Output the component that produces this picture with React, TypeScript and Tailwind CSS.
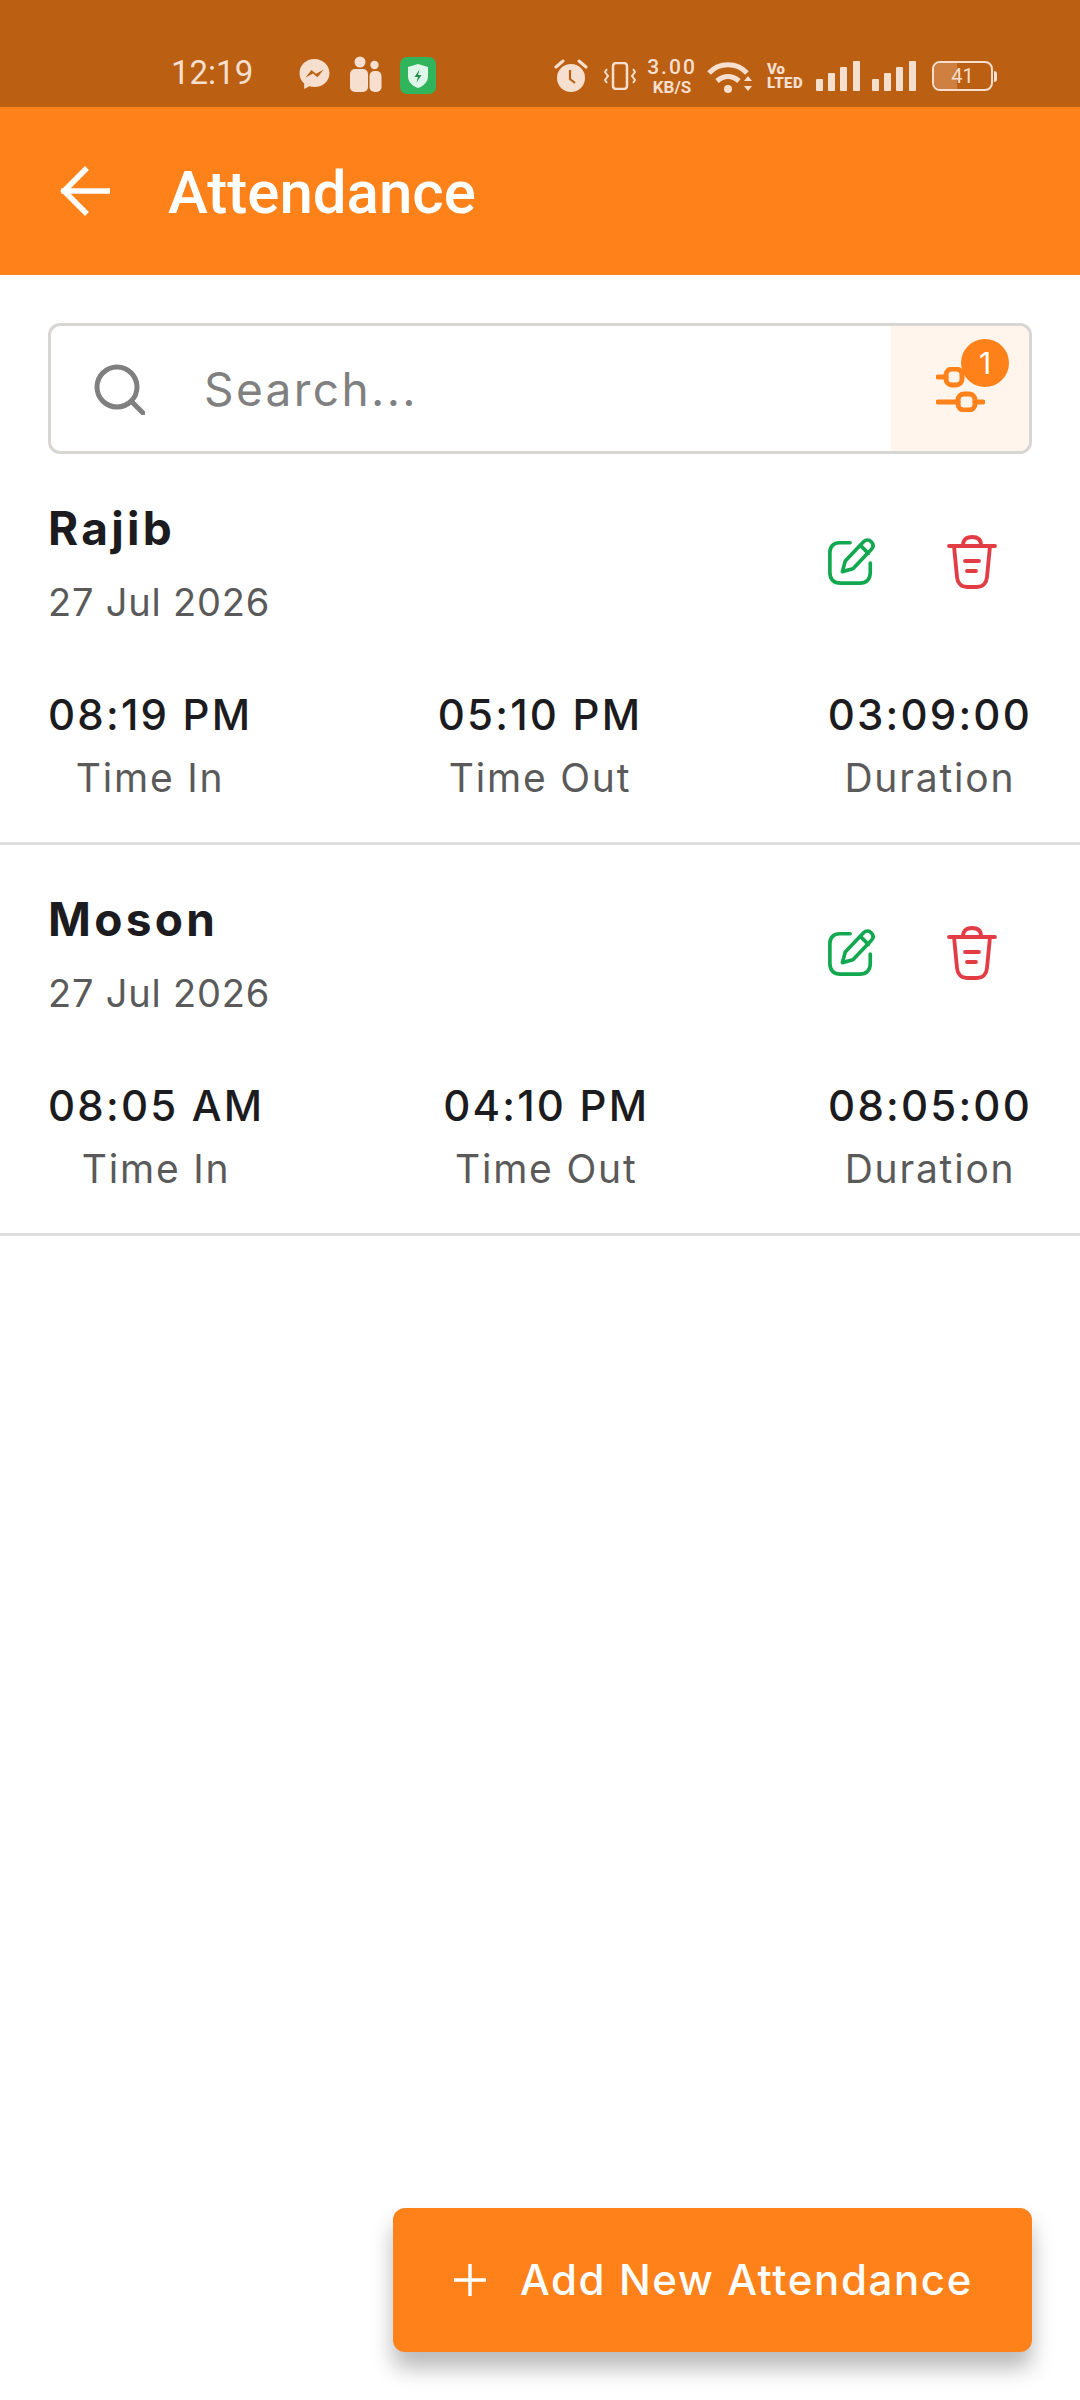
import React from "react";

const font = "font-['Inter','Liberation_Sans',sans-serif]";

const records = [
  { name: "Rajib", date: "27 Jul 2026", timeIn: "08:19 PM", timeOut: "05:10 PM", duration: "03:09:00" },
  { name: "Moson", date: "27 Jul 2026", timeIn: "08:05 AM", timeOut: "04:10 PM", duration: "08:05:00" },
];

const SignalBars = () => (
  <svg width="44" height="30" viewBox="0 0 44 30" fill="#f6dfce">
    <rect x="0" y="18" width="7" height="12" rx="1" />
    <rect x="12" y="12" width="7" height="18" rx="1" />
    <rect x="24" y="6" width="7" height="24" rx="1" />
    <rect x="37" y="0" width="7" height="30" rx="1" />
  </svg>
);

const StatusBar = () => (
  <div className="flex h-[107px] items-end bg-[#bb6012] pb-[12px] pl-[171px] text-[#f6dfce]">
    <span className="mb-[2px] w-[128px] font-['Roboto',sans-serif] text-[33px] leading-[40px] font-normal">12:19</span>
    <svg width="31" height="32" viewBox="0 0 31 32" className="mb-[5px]">
      <path d="M15.5 1C7 1 .5 7.2.5 15.2c0 4.200 1.800 7.900 4.700 10.400V31l5-2.700c1.700.5 3.400.7 5.300.7 8.500 0 15-6.200 15-13.800S24 1 15.500 1z" fill="#f6dfce" />
      <path d="M6.500 19.500l6-7.500 4.500 3.800 7.500-4-6 7.500-4.500-3.800z" fill="#bb6012" />
    </svg>
    <svg width="32" height="36" viewBox="0 0 32 36" fill="#f6dfce" className="mb-[3px] ml-[20px]">
      <circle cx="10" cy="6" r="5.500" />
      <circle cx="24.500" cy="9" r="4.200" />
      <rect x="0" y="13" width="18" height="23" rx="5" />
      <rect x="19.500" y="15" width="12" height="21" rx="5" />
    </svg>
    <div className="mb-[1px] ml-[18px] flex h-[37px] w-[36px] items-center justify-center rounded-[7px] bg-[#30b45c]">
      <svg width="22" height="26" viewBox="0 0 22 26">
        <path d="M11 1l10 3v9c0 6-4.500 10-10 12C5.500 23 1 19 1 13V4z" fill="#dff7ea" />
        <path d="M12.500 6.500L7.500 14H11l-1.500 5.500 5-7.500h-3.500z" fill="#1f8f4a" />
      </svg>
    </div>
    <svg width="34" height="34" viewBox="0 0 34 34" className="mb-[2px] ml-[118px]">
      <circle cx="17" cy="19" r="14" fill="#f6dfce" />
      <path d="M2 8l7-6M32 8l-7-6" stroke="#f6dfce" strokeWidth="3" strokeLinecap="round" />
      <path d="M16 11v9l5 4" stroke="#bb6012" strokeWidth="2.200" fill="none" />
    </svg>
    <svg width="32" height="28" viewBox="0 0 32 28" fill="none" stroke="#f6dfce" className="mb-[5px] ml-[16px]">
      <rect x="9" y="1" width="14" height="26" rx="3" strokeWidth="2.500" />
      <path d="M3 7l-2 3 3 4-3 4 2 3M29 7l2 3-3 4 3 4-2 3" strokeWidth="2" />
    </svg>
    <div className="ml-[9px] flex w-[54px] flex-col items-center gap-[2px] font-['Roboto',sans-serif] font-medium">
      <span className="text-[21px] leading-[21px] tracking-[2px]">3.00</span>
      <span className="text-[17px] leading-[15px] font-bold">KB/S</span>
    </div>
    <svg width="45" height="33" viewBox="0 0 45 33" className="mb-[1px] ml-[8px]" fill="none" stroke="#f6dfce" strokeWidth="5">
      <path d="M2 12C12 1 30 1 40 12" />
      <path d="M10 20c7-6 15-6 22 0" />
      <circle cx="21" cy="28" r="4" fill="#f6dfce" stroke="none" />
      <path d="M37 20l4-5 4 5zM37 25l4 5 4-5z" fill="#f6dfce" stroke="none" />
    </svg>
    <div className="mb-[5px] ml-[15px] flex w-[36px] flex-col font-['Roboto',sans-serif] text-[15px] leading-[14px] font-black">
      <span>Vo</span>
      <span className="tracking-[0.5px]">LTED</span>
    </div>
    <div className="mb-[4px] ml-[13px]"><SignalBars /></div>
    <div className="mb-[4px] ml-[12px]"><SignalBars /></div>
    <div className="mb-[4px] ml-[16px] flex items-center">
      <div className="flex h-[30px] w-[61px] items-center overflow-hidden rounded-[8px] border-2 border-[#f6dfce]">
        <div className="flex h-full w-full items-center justify-center bg-[linear-gradient(90deg,#cf7f3f_0%,#cf7f3f_41%,transparent_41%)] font-['Roboto',sans-serif] text-[20px] leading-[20px]">41</div>
      </div>
      <div className="ml-[1px] h-[11px] w-[3px] rounded-r bg-[#f6dfce]" />
    </div>
  </div>
);

const Header = () => (
  <div className="flex h-[168px] items-center bg-[#ff811a] pl-[60px] text-white">
    <svg width="50" height="50" viewBox="0 0 50 50" fill="none" stroke="white" strokeWidth="5.500" strokeLinecap="square">
      <path d="M4 25h44M25 4L4 25l21 21" />
    </svg>
    <span className="mt-[3px] ml-[58px] font-['Roboto',sans-serif] text-[60px] leading-[66px] font-medium">Attendance</span>
  </div>
);

const SearchBar = () => (
  <div className="mx-[48px] mt-[48px] flex h-[131px] overflow-hidden rounded-[12px] border-[3px] border-[#d8d6d3]">
    <div className="flex flex-1 items-center pl-[42px]">
      <svg width="52" height="52" viewBox="0 0 52 52" fill="none" stroke="#7f7f7f" strokeWidth="5">
        <circle cx="24" cy="24" r="20" />
        <path d="M39 39l11 11" strokeLinecap="round" />
      </svg>
      <span className={`ml-[59px] text-[46px] leading-[56px] tracking-[2.400px] text-[#808080] ${font}`}>Search...</span>
    </div>
    <div className="relative flex w-[138px] items-center justify-center bg-[#fff5ec]">
      <svg width="49" height="45" viewBox="0 0 49 45" fill="none" stroke="#ff811a" strokeWidth="5" strokeLinecap="round" className="mt-[2px]">
        <path d="M2 10h8M2 35h20M39 35h8" />
        <rect x="10" y="2" width="16" height="16" rx="6" />
        <rect x="22" y="27" width="17" height="16" rx="6" />
      </svg>
      <div className={`absolute right-[20px] top-[13px] flex h-[48px] w-[48px] items-center justify-center rounded-full bg-[#ff811a] text-[30px] text-white ${font}`}>1</div>
    </div>
  </div>
);

const EditIcon = () => (
  <svg width="50" height="50" viewBox="0 0 52 52" fill="none" stroke="#12a850" strokeWidth="3.800" strokeLinecap="round" strokeLinejoin="round">
    <path d="M24 6H13C7 6 3 10 3 16v21c0 7 4 11 11 11h20c7 0 11-4 11-11V27" />
    <path d="M16 36l3-11L38 5c2.500-2.500 6-2.500 8 0 2.500 2.500 2.500 5.500 0 8L27 33z" />
    <path d="M35 9l8 8" />
  </svg>
);

const TrashIcon = () => (
  <svg width="50" height="54" viewBox="0 0 50 54" fill="none" stroke="#e23d45" strokeWidth="3.800" strokeLinecap="round" strokeLinejoin="round">
    <path d="M2 11h46" />
    <path d="M16 10c0-5 3-8 9-8s9 3 9 8" />
    <path d="M7 11l3 31c.500 6 4 10 10 10h10c6 0 9.500-4 10-10l3-31" />
    <path d="M18 26h14M20 36h9" />
  </svg>
);

const TimeColumn = ({ value, label }: { value: string; label: string }) => (
  <div className="flex flex-col items-center">
    <span className={`text-[42px] leading-[60px] font-medium tracking-[2.200px] text-[#1b1b20] ${font}`}>{value}</span>
    <span className={`mt-[3px] text-[39px] leading-[60px] tracking-[1.800px] text-[#5a5a5a] ${font}`}>{label}</span>
  </div>
);

const AttendanceRow = ({ name, date, timeIn, timeOut, duration }: (typeof records)[number]) => (
  <div className="border-b-[3px] border-[#dfdfdf] px-[48px] pt-[41px] pb-[34px]">
    <div className="flex items-start justify-between">
      <div>
        <div className={`text-[46px] leading-[66px] font-bold tracking-[3.300px] text-[#1b1b20] ${font}`}>{name}</div>
        <div className={`mt-[12px] text-[38px] leading-[58px] tracking-[0.800px] text-[#5a5a5a] ${font}`}>{date}</div>
      </div>
      <div className="mt-[40px] mr-[35px] flex items-center gap-[70px]">
        <EditIcon />
        <TrashIcon />
      </div>
    </div>
    <div className="mt-[54px] flex justify-between">
      <TimeColumn value={timeIn} label="Time In" />
      <TimeColumn value={timeOut} label="Time Out" />
      <TimeColumn value={duration} label="Duration" />
    </div>
  </div>
);

const App = () => {
  return (
    <div className="flex h-[2400px] w-[1080px] flex-col overflow-hidden bg-white">
      <StatusBar />
      <Header />
      <SearchBar />
      {records.map((record) => (
        <AttendanceRow key={record.name} {...record} />
      ))}
      <button className="mt-auto mr-[48px] mb-[48px] flex h-[144px] w-[639px] items-center self-end rounded-[12px] bg-[#ff811a] pl-[60px] text-white shadow-[0_16px_22px_rgba(0,0,0,0.28)]">
        <svg width="34" height="34" viewBox="0 0 34 34" stroke="white" strokeWidth="3.500">
          <path d="M17 1v32M1 17h32" />
        </svg>
        <span className={`ml-[33px] text-[42px] leading-[60px] font-medium tracking-[1.600px] ${font}`}>Add New Attendance</span>
      </button>
    </div>
  );
};

export default App;
